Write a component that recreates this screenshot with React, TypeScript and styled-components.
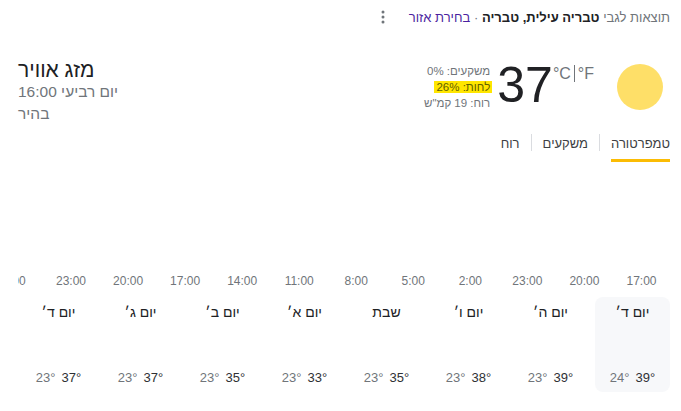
import React from "react";
import styled, { createGlobalStyle } from "styled-components";

const GlobalStyle = createGlobalStyle`
  html, body {
    margin: 0;
    padding: 0;
    background: #fff;
  }
`;

const Page = styled.div`
  width: 681px;
  height: 411px;
  box-sizing: border-box;
  overflow: hidden;
  padding: 0 11px 0 18px;
  direction: rtl;
  font-family: "Liberation Sans", Arial, sans-serif;
  color: #202124;
`;

const TopBar = styled.div`
  display: flex;
  align-items: center;
  gap: 24px;
  height: 34px;
  font-size: 13px;
  color: #70757a;
  white-space: nowrap;
`;

const Strong = styled.b`
  color: #202124;
`;

const RegionLink = styled.a`
  color: #4b1fa0;
`;

const Weather = styled.div`
  display: flex;
  justify-content: space-between;
  margin-top: 25px;
  height: 65px;
`;

const Current = styled.div`
  display: flex;
  align-items: flex-start;
`;

const Sun = styled.svg`
  width: 48px;
  height: 48px;
  margin: 4px 6px 0 0;
`;

const Temp = styled.div`
  display: flex;
  align-items: flex-start;
  direction: ltr;
  margin-right: 22px;
`;

const TempValue = styled.span`
  font-size: 50px;
  line-height: 52px;
`;

const Units = styled.span`
  font-size: 16px;
  line-height: 20px;
  margin-top: 5px;
  color: #70757a;
`;

const Divider = styled.span`
  display: inline-block;
  width: 1px;
  height: 17px;
  margin: 0 3px;
  background: #70757a;
  vertical-align: -3px;
`;

const Details = styled.div`
  margin: 4px 7px 0 0;
  font-size: 11.5px;
  line-height: 16px;
  color: #70757a;
`;

const DetailRow = styled.div`
  white-space: nowrap;
`;

const Highlight = styled.span`
  background: #ffe600;
  color: #5f6000;
  padding: 0 2px;
  margin: 0 -2px;
`;

const Summary = styled.div`
  text-align: left;
`;

const Title = styled.div`
  font-size: 21px;
  line-height: 22px;
`;

const SummaryLine = styled.div`
  font-size: 15.5px;
  line-height: 22px;
  color: #70757a;
`;

const Tabs = styled.div`
  display: flex;
  align-items: flex-start;
  margin-top: 5px;
  height: 37px;
`;

const Tab = styled.div<{ $active?: boolean }>`
  height: 30px;
  line-height: 30px;
  font-size: 13px;
  color: #3c4043;
  border-bottom: 3px solid ${(p) => (p.$active ? "#fbbc04" : "transparent")};
  white-space: nowrap;
`;

const TabSep = styled.div`
  width: 1px;
  height: 17px;
  margin: 5px 11px 0 11px;
  background: #dadce0;
`;

const Chart = styled.div`
  height: 104px;
`;

const Hours = styled.div`
  display: flex;
  overflow: hidden;
  height: 20px;
  margin-top: 1px;
`;

const Hour = styled.div`
  flex: 0 0 57.05px;
  text-align: center;
  font-size: 12px;
  line-height: 20px;
  color: #70757a;
`;

const Days = styled.div`
  display: flex;
  gap: 7px;
  margin-top: 6px;
`;

const Day = styled.div<{ $active?: boolean }>`
  flex: 0 0 75px;
  height: 95px;
  box-sizing: border-box;
  display: flex;
  flex-direction: column;
  justify-content: space-between;
  align-items: center;
  padding: 6px 0 5px;
  border-radius: 8px;
  background: ${(p) => (p.$active ? "#f7f8fa" : "transparent")};
`;

const DayName = styled.div`
  font-size: 14px;
  line-height: 18px;
  color: #202124;
`;

const Range = styled.div`
  display: flex;
  gap: 6px;
  direction: rtl;
  font-size: 13px;
  line-height: 18px;
`;

const High = styled.span`
  color: #2f3134;
`;

const Low = styled.span`
  color: #70757a;
`;

const hours = ["17:00", "20:00", "23:00", "2:00", "5:00", "8:00", "11:00", "14:00", "17:00", "20:00", "23:00", "2:00"];

const days = [
  { name: "יום ד׳", high: 39, low: 24 },
  { name: "יום ה׳", high: 39, low: 23 },
  { name: "יום ו׳", high: 38, low: 23 },
  { name: "שבת", high: 35, low: 23 },
  { name: "יום א׳", high: 33, low: 23 },
  { name: "יום ב׳", high: 35, low: 23 },
  { name: "יום ג׳", high: 37, low: 23 },
  { name: "יום ד׳", high: 37, low: 23 },
];

export default function App() {
  return (
    <Page>
      <GlobalStyle />
      <TopBar>
        <span>
          תוצאות לגבי <Strong>טבריה עילית, טבריה</Strong> · <RegionLink>בחירת אזור</RegionLink>
        </span>
        <svg width="4" height="14" viewBox="0 0 4 14">
          <circle cx="2" cy="2" r="1.5" fill="#70757a" />
          <circle cx="2" cy="7" r="1.5" fill="#70757a" />
          <circle cx="2" cy="12" r="1.5" fill="#70757a" />
        </svg>
      </TopBar>
      <Weather>
        <Current>
          <Sun viewBox="0 0 48 48">
            <circle cx="24" cy="24" r="23" fill="#fedf68" />
          </Sun>
          <Temp>
            <TempValue>37</TempValue>
            <Units>
              °C
              <Divider />
              °F
            </Units>
          </Temp>
          <Details>
            <DetailRow>משקעים: 0%</DetailRow>
            <DetailRow>
              <Highlight>לחות: 26%</Highlight>
            </DetailRow>
            <DetailRow>רוח: 19 קמ"ש</DetailRow>
          </Details>
        </Current>
        <Summary>
          <Title>מזג אוויר</Title>
          <SummaryLine>יום רביעי 16:00</SummaryLine>
          <SummaryLine>בהיר</SummaryLine>
        </Summary>
      </Weather>
      <Tabs>
        <Tab $active>טמפרטורה</Tab>
        <TabSep />
        <Tab>משקעים</Tab>
        <TabSep />
        <Tab>רוח</Tab>
      </Tabs>
      <Chart />
      <Hours>
        {hours.map((h, i) => (
          <Hour key={i}>{h}</Hour>
        ))}
      </Hours>
      <Days>
        {days.map((d, i) => (
          <Day key={i} $active={i === 0}>
            <DayName>{d.name}</DayName>
            <Range>
              <High>{d.high}°</High>
              <Low>{d.low}°</Low>
            </Range>
          </Day>
        ))}
      </Days>
    </Page>
  );
}
